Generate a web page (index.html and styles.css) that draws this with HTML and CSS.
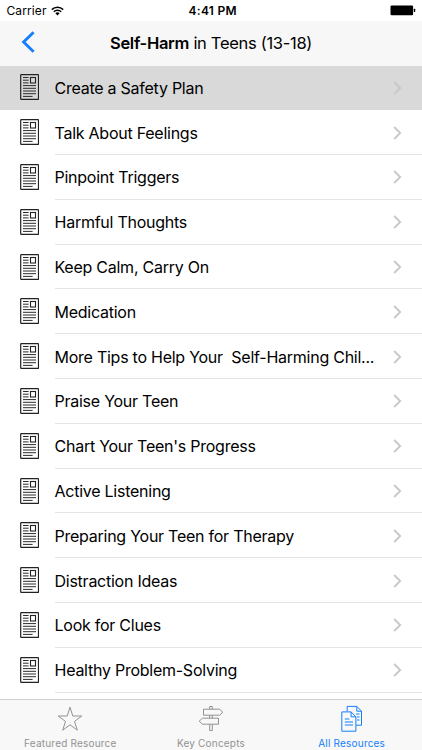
FILE: index.html
```
<!DOCTYPE html>
<html lang="en">

<head>
    <meta charset="UTF-8">
    <meta name="viewport" content="width=device-width, initial-scale=1.0">
    <link rel="stylesheet" href="styles.css">
    <title>Self-Harm in Teens (13-18)</title>
</head>

<body>
    <!-- shared icons -->
    <svg class="defs" width="0" height="0">
        <symbol id="doc" viewBox="0 0 19 26">
            <rect x=".7" y=".6" width="17.8" height="24.8" rx=".6" fill="none" stroke="#222" stroke-width="1.2" />
            <rect x="10.5" y="3.5" width="5" height="5.5" fill="none" stroke="#222" stroke-width="1.1" />
            <path d="M3 3.5h5.6M3 6.2h5.6M3 8.9h5.6M3 11.6h13M3 14.3h13M3 17h13M3 19.7h13M3 22.4h9.6" fill="none" stroke="#2a2a2a" />
        </symbol>
        <symbol id="chevron" viewBox="0 0 9 14">
            <path d="M1.2 1l6 6-6 6" fill="none" stroke="#c7c7cc" stroke-width="1.8" />
        </symbol>
    </svg>

    <div class="status-bar">
        <span class="carrier">Carrier</span>
        <svg class="wifi" width="13" height="10" viewBox="0 0 13 10">
            <path d="M.8 3.6a8.1 8.1 0 0 1 11.4 0M2.8 5.8a5.2 5.2 0 0 1 7.4 0" fill="none" stroke="#000" stroke-width="1.5" />
            <path d="M4.4 7.3a3 3 0 0 1 4.2 0L6.5 9.5z" />
        </svg>
        <span class="time">4:41 PM</span>
        <svg class="battery" width="26" height="11" viewBox="0 0 26 11">
            <rect x=".5" y=".6" width="22.6" height="9.6" rx="1.2" />
            <rect x="23.8" y="3.8" width="1.4" height="3.2" rx=".5" />
        </svg>
    </div>

    <div class="nav-bar">
        <svg class="back" width="14" height="22" viewBox="0 0 14 22">
            <path d="M12.6 1.2L2.6 11l10 9.8" fill="none" stroke="#147efb" stroke-width="2.9" />
        </svg>
        <h1><b>Self-Harm</b> in Teens (13-18)</h1>
    </div>

    <ul class="list">
        <li class="selected"><svg class="doc"><use href="#doc" /></svg><div class="cell"><span>Create a Safety Plan</span><svg class="chevron"><use href="#chevron" /></svg></div></li>
        <li><svg class="doc"><use href="#doc" /></svg><div class="cell"><span>Talk About Feelings</span><svg class="chevron"><use href="#chevron" /></svg></div></li>
        <li><svg class="doc"><use href="#doc" /></svg><div class="cell"><span>Pinpoint Triggers</span><svg class="chevron"><use href="#chevron" /></svg></div></li>
        <li><svg class="doc"><use href="#doc" /></svg><div class="cell"><span>Harmful Thoughts</span><svg class="chevron"><use href="#chevron" /></svg></div></li>
        <li><svg class="doc"><use href="#doc" /></svg><div class="cell"><span>Keep Calm, Carry On</span><svg class="chevron"><use href="#chevron" /></svg></div></li>
        <li><svg class="doc"><use href="#doc" /></svg><div class="cell"><span>Medication</span><svg class="chevron"><use href="#chevron" /></svg></div></li>
        <li><svg class="doc"><use href="#doc" /></svg><div class="cell"><span>More Tips to Help Your  Self-Harming Chil...</span><svg class="chevron"><use href="#chevron" /></svg></div></li>
        <li><svg class="doc"><use href="#doc" /></svg><div class="cell"><span>Praise Your Teen</span><svg class="chevron"><use href="#chevron" /></svg></div></li>
        <li><svg class="doc"><use href="#doc" /></svg><div class="cell"><span>Chart Your Teen's Progress</span><svg class="chevron"><use href="#chevron" /></svg></div></li>
        <li><svg class="doc"><use href="#doc" /></svg><div class="cell"><span>Active Listening</span><svg class="chevron"><use href="#chevron" /></svg></div></li>
        <li><svg class="doc"><use href="#doc" /></svg><div class="cell"><span>Preparing Your Teen for Therapy</span><svg class="chevron"><use href="#chevron" /></svg></div></li>
        <li><svg class="doc"><use href="#doc" /></svg><div class="cell"><span>Distraction Ideas</span><svg class="chevron"><use href="#chevron" /></svg></div></li>
        <li><svg class="doc"><use href="#doc" /></svg><div class="cell"><span>Look for Clues</span><svg class="chevron"><use href="#chevron" /></svg></div></li>
        <li><svg class="doc"><use href="#doc" /></svg><div class="cell"><span>Healthy Problem-Solving</span><svg class="chevron"><use href="#chevron" /></svg></div></li>
    </ul>

    <div class="tab-bar">
        <div class="tab">
            <svg width="26" height="28" viewBox="0 0 26 28">
                <path d="M13 2.2l2.8 8.8h9l-7.3 5.4 2.8 8.8-7.3-5.4-7.3 5.4 2.8-8.8L1.2 11h9z" fill="none" stroke="#929292" />
            </svg>
            <span>Featured Resource</span>
        </div>
        <div class="tab">
            <svg width="26" height="28" viewBox="0 0 26 28">
                <path d="M5.5 4.2h16l3.4 3-3.4 3h-16zM20.5 13.2h-16l-3.3 3 3.3 3h16zM11.7 4.2V1.5h2.6v2.7M11.7 10.2v3M14.3 10.2v3M11.7 19.2v6.4h2.6v-6.4" fill="none" stroke="#929292" />
            </svg>
            <span>Key Concepts</span>
        </div>
        <div class="tab active">
            <svg width="26" height="28" viewBox="0 0 26 28">
                <path d="M8.2 6.2V1.4h9.6l4.7 4.8v14h-5.2M17.8 1.4v4.8h4.7M17 9h3.5M18 12h2.5M18 15h2.5" fill="none" stroke="#147efb" />
                <path d="M2.8 6.9h9.3l4.8 4.9v14.4H2.8zM12.1 6.9v4.9h4.8M5.8 14h4.6M5.8 17h8.2M5.8 20h8.2" fill="none" stroke="#147efb" />
            </svg>
            <span>All Resources</span>
        </div>
    </div>
</body>

</html>
```
FILE: styles.css
```
body {
    margin: 0;
    height: 750px;
    overflow: hidden;
    display: flex;
    flex-direction: column;
    background-color: #fff;
    color: #000;
    font-family: Inter, "Liberation Sans", sans-serif;
}

.defs {
    position: absolute;
}

.status-bar {
    display: grid;
    grid-template-columns: 44.5px 119.5px 1fr 32px;
    align-items: center;
    height: 20.5px;
    padding-left: 6.5px;
    flex: none;
    box-sizing: border-box;
    font-size: 12px;
    line-height: 20px;
}

.carrier {
    padding-top: 1px;
    letter-spacing: .1px;
}

.time {
    padding: 1px 0 0 18px;
    font-weight: 600;
    letter-spacing: .3px;
}

.nav-bar {
    display: flex;
    align-items: center;
    height: 45px;
    flex: none;
    background-color: #f7f7f7;
}

.back {
    margin-left: 21px;
    margin-top: -2px;
}

h1 {
    margin: 0 0 0 75px;
    font-size: 16.5px;
    font-weight: 400;
    letter-spacing: -.31px;
    white-space: nowrap;
}

h1 b {
    font-weight: 600;
}

.list {
    margin: 0;
    padding: 0;
    list-style: none;
    height: 633.5px;
    flex: none;
    overflow: hidden;
}

.list li {
    display: flex;
    align-items: center;
    height: 44.8px;
}

.list .selected {
    background-color: #d9d9d9;
}

.doc {
    width: 19px;
    height: 26px;
    margin-left: 20px;
    margin-top: -1px;
}

.cell {
    display: flex;
    align-items: center;
    flex: 1;
    height: 100%;
    margin-left: 15.5px;
    padding-top: 1px;
    padding-right: 20.5px;
    box-sizing: border-box;
    border-bottom: 1px solid #e4e4e6;
    font-size: 16px;
    letter-spacing: -.25px;
    white-space: pre;
}

.selected .cell {
    border-color: #d9d9d9;
}

.chevron {
    width: 9px;
    height: 14px;
    margin-left: auto;
}

.tab-bar {
    display: grid;
    grid-template-columns: repeat(3, 1fr);
    height: 51px;
    flex: none;
    box-sizing: border-box;
    border-top: 1px solid #d0d0d0;
    background-color: #f8f8f8;
}

.tab {
    display: flex;
    flex-direction: column;
    align-items: center;
    padding-top: 5px;
    color: #929292;
    font-size: 10px;
    line-height: 12px;
    letter-spacing: .2px;
}

.tab span {
    margin-top: 4px;
}

.active {
    color: #147efb;
}
```
